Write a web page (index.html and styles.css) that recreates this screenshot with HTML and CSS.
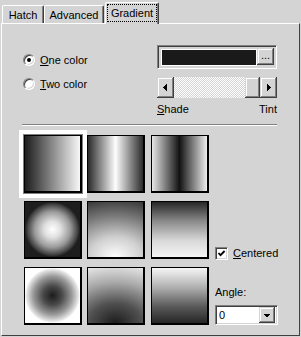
FILE: index.html
```html
<!DOCTYPE html>
<html>
<head>
<meta charset="utf-8">
<link rel="stylesheet" href="styles.css">
</head>
<body>
<div class="tabs">
  <div class="tab tab-hatch">Hatch</div>
  <div class="tab tab-adv">Advanced</div>
  <div class="tab tab-grad"><span class="focus">Gradient</span></div>
</div>
<div class="panel">
  <div class="top">
    <div class="radios">
      <div class="radio-row"><span class="radio checked"></span><span><u>O</u>ne color</span></div>
      <div class="radio-row"><span class="radio"></span><span><u>T</u>wo color</span></div>
    </div>
    <div class="controls">
      <div class="colorbox sunken">
        <div class="colorfill"></div>
        <div class="btn dots">...</div>
      </div>
      <div class="scroll">
        <div class="btn arrow-btn"><svg width="17" height="21" viewBox="0 0 17 21"><polygon points="6,10.5 10,6.5 10,14.5" fill="#000"/></svg></div>
        <div class="track"></div>
        <div class="btn thumb"></div>
        <div class="btn arrow-btn"><svg width="17" height="21" viewBox="0 0 17 21"><polygon points="11,10.5 7,6.5 7,14.5" fill="#000"/></svg></div>
      </div>
      <div class="shade-tint"><span><u>S</u>hade</span><span>Tint</span></div>
    </div>
  </div>
  <div class="sep"></div>
  <div class="grid">
    <div class="swatch sel g1"></div>
    <div class="swatch g2"></div>
    <div class="swatch g3"></div>
    <div class="spacer"></div>
    <div class="swatch g4"></div>
    <div class="swatch g5"></div>
    <div class="swatch g6"></div>
    <div class="centered">
      <span class="checkbox sunken"><svg width="9" height="9" viewBox="0 0 9 9"><polyline points="1.5,4 3.5,6.2 7.6,2" fill="none" stroke="#000" stroke-width="1.8"/></svg></span>
      <span><u>C</u>entered</span>
    </div>
    <div class="swatch g7"></div>
    <div class="swatch g8"></div>
    <div class="swatch g9"></div>
    <div class="angle">
      <div class="angle-label">Angle:</div>
      <div class="combo sunken">
        <span class="combo-text">0</span>
        <div class="btn drop"><svg width="16" height="16" viewBox="0 0 16 16"><polygon points="4.5,7 11.5,7 8,10.5" fill="#000"/></svg></div>
      </div>
    </div>
  </div>
</div>
</body>
</html>
```

FILE: styles.css
```css
* { box-sizing: border-box; }
html, body { margin: 0; padding: 0; }
body {
  width: 301px;
  height: 337px;
  overflow: hidden;
  background: #d4d4d4;
  color: #000;
  font: 11px/13px "Liberation Sans", Arial, sans-serif;
}

.tabs {
  display: flex;
  align-items: flex-end;
  height: 23px;
  padding-left: 2px;
}
.tab {
  height: 18px;
  border: 1px solid;
  border-bottom: 0;
  border-color: #fff #404040 transparent #fff;
  border-radius: 2px 2px 0 0;
  box-shadow: inset -1px 0 #808080;
  display: flex;
  align-items: center;
  justify-content: center;
  padding-top: 1px;
}
.tab-hatch { width: 42px; }
.tab-adv { width: 60px; }
.tab-grad {
  width: 54px;
  height: 22px;
  margin-left: 1px;
  margin-bottom: -1px;
  position: relative;
  z-index: 1;
  background: #d4d4d4;
  align-items: flex-start;
  padding: 1px 1px 0;
}
.focus {
  display: flex;
  align-items: center;
  justify-content: center;
  width: 100%;
  height: 18px;
  border: 1px dotted #000;
}

.panel {
  margin-left: 1px;
  width: 299px;
  height: 313px;
  border-top: 1px solid #fff;
  border-left: 1px solid #fff;
  border-right: 1px solid #404040;
  border-bottom: 1px solid #404040;
}

.top {
  display: flex;
  padding-left: 21px;
}
.radios {
  width: 134px;
  padding-top: 30px;
  display: flex;
  flex-direction: column;
  gap: 12px;
}
.radio-row {
  display: flex;
  align-items: center;
  height: 12px;
  gap: 5px;
}
.radio {
  width: 12px;
  height: 12px;
  border-radius: 50%;
  border: 1px solid;
  border-color: #808080 #fff #fff #808080;
  box-shadow: inset 1px 1px #404040, inset -1px -1px #d4d4d4;
  background: #fff;
  position: relative;
  flex: none;
}
.radio.checked::after {
  content: "";
  position: absolute;
  left: 3px;
  top: 3px;
  width: 4px;
  height: 4px;
  border-radius: 50%;
  background: #000;
}

.sunken {
  border: 1px solid;
  border-color: #808080 #fff #fff #808080;
  box-shadow: inset 1px 1px #404040, inset -1px -1px #d4d4d4;
}
.btn {
  background: #d4d4d4;
  box-shadow: inset -1px -1px #404040, inset 1px 1px #d4d4d4, inset -2px -2px #808080, inset 2px 2px #fff;
}

.controls {
  width: 120px;
  padding-top: 21px;
}
.colorbox {
  height: 24px;
  display: flex;
  padding: 2px 2px 2px 2px;
  border-width: 1px;
}
.colorfill {
  flex: 1;
  background: #1a1a1a;
  border: 1px solid #fff;
  margin: 1px 0 0 1px;
}
.dots {
  width: 17px;
  height: 17px;
  font-size: 11px;
  line-height: 13px;
  text-align: center;
  padding-top: 1px;
  letter-spacing: 0;
}

.scroll {
  margin-top: 8px;
  height: 21px;
  display: flex;
}
.arrow-btn {
  width: 17px;
  height: 21px;
  flex: none;
}
.arrow-btn svg { display: block; shape-rendering: crispEdges; }
.track {
  flex: 1;
  background-color: #d4d4d4;
  background-image: conic-gradient(#fff 25%, #d4d4d4 0 50%, #fff 0 75%, #d4d4d4 0);
  background-size: 2px 2px;
}
.thumb {
  width: 15px;
  height: 21px;
  flex: none;
}
.shade-tint {
  margin-top: 5px;
  display: flex;
  justify-content: space-between;
}

.sep {
  margin: 8px 0 0 20px;
  width: 255px;
  height: 2px;
  border-top: 1px solid #808080;
  border-bottom: 1px solid #fff;
}

.grid {
  margin: 9px 0 0 22px;
  display: grid;
  grid-template-columns: 63px 64px 64px 63px;
  grid-template-rows: 58px 58px 58px;
  row-gap: 8px;
}
.swatch {
  width: 58px;
  height: 58px;
  border: 1px solid #000;
  border-right-width: 2px;
  border-bottom-width: 2px;
}
.swatch.sel {
  box-shadow: 0 0 0 1px #808080, 0 0 0 5px #fff;
}
.g1 { background: linear-gradient(to right, #1c1c1c, #f8f8f8); }
.g2 { background: linear-gradient(to right, #2a2a2a, #fdfdfd 50%, #2a2a2a); }
.g3 { background: linear-gradient(to right, #e6e6e6, #121212 50%, #eeeeee); }
.g4 { background: radial-gradient(circle closest-side, #ffffff 0%, #e0e0e0 30%, #9a9a9a 65%, #404040 92%, #1e1e1e 100%), #1e1e1e; }
.g5 { background: radial-gradient(ellipse 160% 120% at 50% 100%, #ffffff 0%, #d0d0d0 30%, #7a7a7a 62%, #1e1e1e 100%); }
.g6 { background: linear-gradient(to bottom, #262626 0%, #8a8a8a 35%, #d8d8d8 70%, #f6f6f6 100%); }
.g7 { background: radial-gradient(circle closest-side, #1c1c1c 0%, #4a4a4a 35%, #9a9a9a 70%, #e8e8e8 95%, #ffffff 100%), #fff; }
.g8 { background: radial-gradient(ellipse 160% 120% at 50% 100%, #1c1c1c 0%, #505050 30%, #aaaaaa 62%, #ffffff 100%); }
.g9 { background: linear-gradient(to bottom, #f6f6f6 0%, #b0b0b0 35%, #5a5a5a 70%, #262626 100%); }

.centered {
  align-self: end;
  display: flex;
  align-items: center;
  gap: 5px;
  height: 13px;
  margin-bottom: -1px;
}
.checkbox {
  width: 13px;
  height: 13px;
  background: #fff;
  padding: 1px;
  flex: none;
}
.checkbox svg { display: block; }

.angle {
  align-self: end;
}
.angle-label {
  height: 13px;
}
.combo {
  margin-top: 6px;
  width: 63px;
  height: 20px;
  background: #fff;
  display: flex;
  align-items: center;
  justify-content: space-between;
  padding: 2px;
}
.combo-text {
  padding-left: 1px;
}
.drop {
  width: 16px;
  height: 16px;
}
.drop svg { display: block; shape-rendering: crispEdges; }
```
